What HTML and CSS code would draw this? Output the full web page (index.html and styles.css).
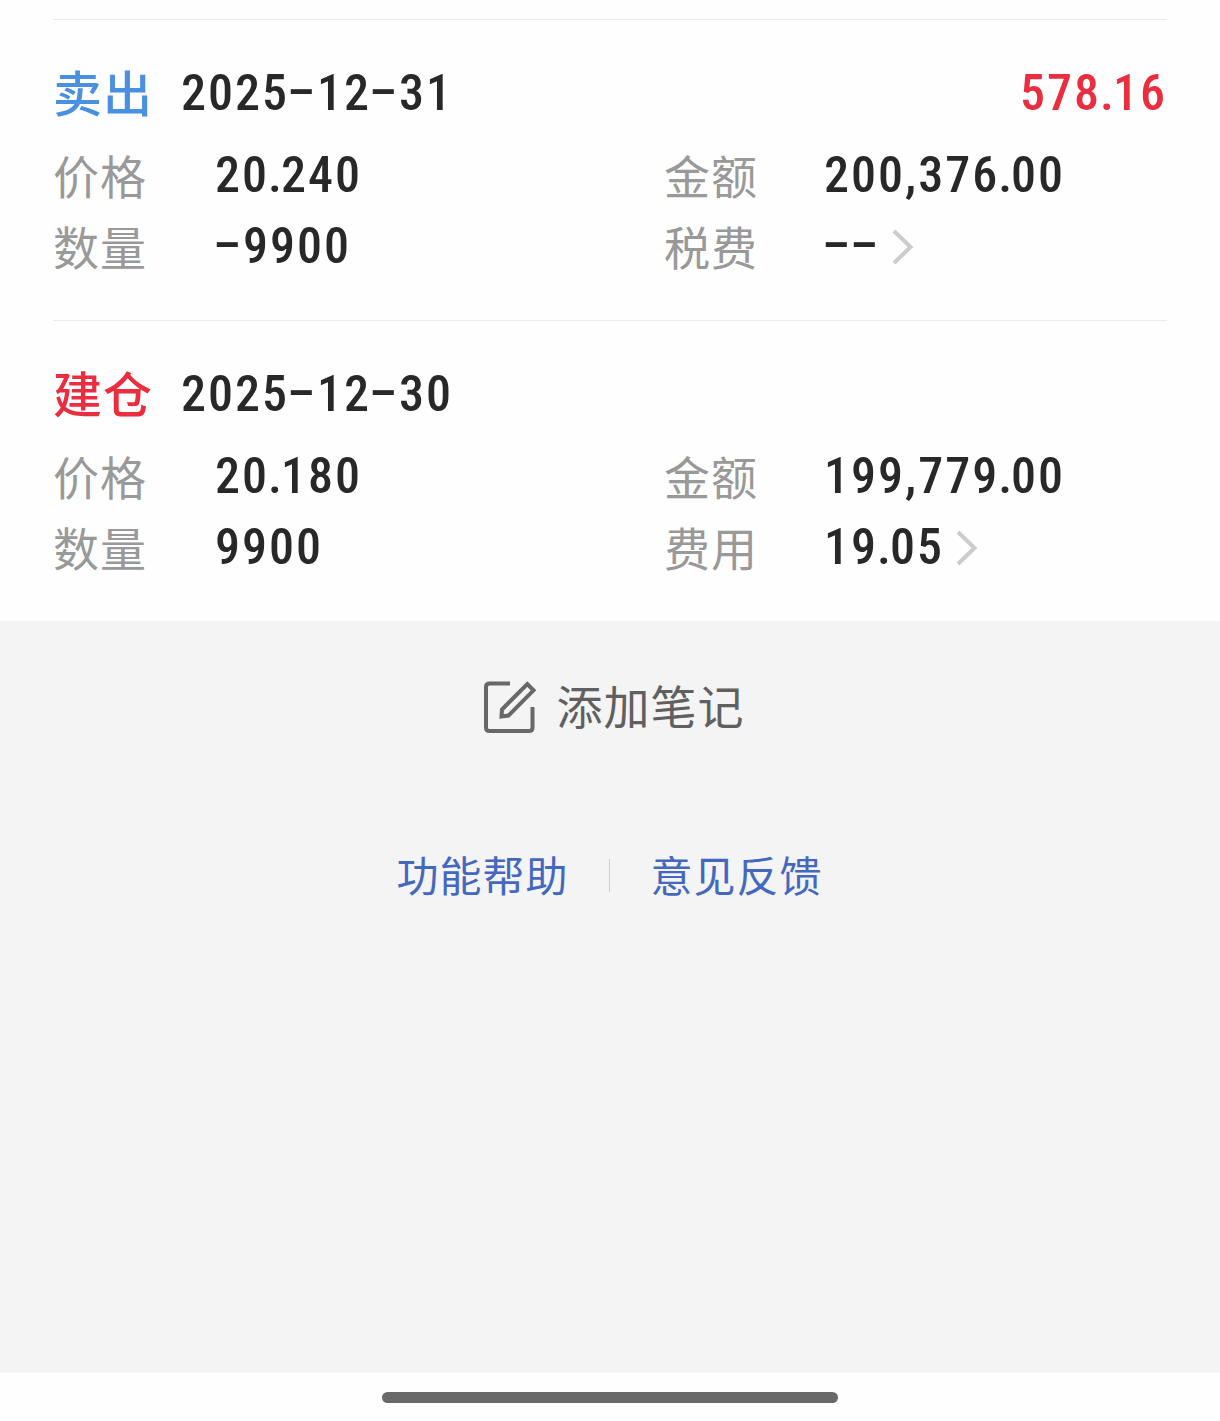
FILE: index.html
```html
<!DOCTYPE html>
<html lang="zh-CN">
<head>
    <meta charset="UTF-8">
    <meta name="viewport" content="width=device-width, initial-scale=1.0">
    <title>交易记录</title>
    <link rel="stylesheet" href="styles.css">
</head>
<body>
    <main class="record-list">
        <section class="record">
            <div class="record-header">
                <span class="record-type sell">卖出</span>
                <span class="number">2025<span class="dash">–</span>12<span class="dash">–</span>31</span>
                <span class="number profit">578<span class="dot">.</span>16</span>
            </div>
            <div class="record-grid">
                <span class="label">价格</span>
                <span class="number">20<span class="dot">.</span>240</span>
                <span class="label">金额</span>
                <span class="number">200,376<span class="dot">.</span>00</span>
                <span class="label">数量</span>
                <span class="number"><span class="dash">–</span>9900</span>
                <span class="label">税费</span>
                <span class="number link-value"><span class="dash">–</span><span class="dash">–</span><svg class="arrow" viewBox="0 0 22 36"><path d="M2 2L18.500 18L2 34"/></svg></span>
            </div>
        </section>

        <section class="record">
            <div class="record-header">
                <span class="record-type open">建仓</span>
                <span class="number">2025<span class="dash">–</span>12<span class="dash">–</span>30</span>
            </div>
            <div class="record-grid">
                <span class="label">价格</span>
                <span class="number">20<span class="dot">.</span>180</span>
                <span class="label">金额</span>
                <span class="number">199,779<span class="dot">.</span>00</span>
                <span class="label">数量</span>
                <span class="number">9900</span>
                <span class="label">费用</span>
                <span class="number link-value">19<span class="dot">.</span>05<svg class="arrow" viewBox="0 0 22 36"><path d="M2 2L18.500 18L2 34"/></svg></span>
            </div>
        </section>
    </main>

    <div class="page-bottom">
        <div class="add-note">
            <svg class="note-icon" viewBox="0 0 54 54">
                <path d="M27 3.500H6.500Q3 3.500 3 7V47.500Q3 51 6.500 51H46Q49.500 51 49.500 47.500V27"/>
                <path d="M18.500 36.500L19 29.500L44.300 4L50.500 10.300L25.500 35.500Z"/>
            </svg>
            <span>添加笔记</span>
        </div>
        <div class="footer-links">
            <a class="footer-link">功能帮助</a>
            <span class="divider"></span>
            <a class="footer-link">意见反馈</a>
        </div>
    </div>

    <div class="home-bar">
        <div class="home-indicator"></div>
    </div>
</body>
</html>
```
FILE: styles.css
```css
* {
    box-sizing: border-box;
}
body {
    margin: 0;
    height: 1421px;
    display: flex;
    flex-direction: column;
    background: #fefefe;
    font-family: "Noto Sans CJK SC", sans-serif;
}
.record-list {
    height: 621px;
    padding: 19px 53px 0;
}
.record {
    height: 301px;
    border-top: 1px solid #ebebeb;
    padding-top: 38px;
}
.record-header {
    display: flex;
    align-items: center;
    height: 70px;
}
.record-type {
    width: 128px;
    margin-top: -4px;
    font-size: 49px;
    line-height: 66px;
    letter-spacing: 1px;
    font-weight: 500;
}
.sell {
    color: #4a90e2;
}
.open {
    color: #ea2d3f;
}
.number {
    font-family: "Roboto Condensed", Roboto, "Noto Sans CJK SC", sans-serif;
    font-size: 50px;
    font-weight: 500;
    font-stretch: 75%;
    letter-spacing: 2px;
    color: #282828;
    white-space: nowrap;
}
.dash {
    position: relative;
    top: -1px;
    margin-left: -2px;
}
.dot {
    margin-left: -1px;
    letter-spacing: -1px;
}
.profit {
    margin-left: auto;
    color: #ea2d3f;
}
.record-grid {
    display: grid;
    grid-template-columns: 162px 449px 160px 1fr;
    grid-auto-rows: 71px;
    align-items: center;
    padding: 11px 0 0;
}
.label {
    font-size: 46px;
    line-height: 71px;
    letter-spacing: 1px;
    color: #999;
}
.link-value {
    display: flex;
    align-items: center;
}
.arrow {
    width: 22px;
    height: 36px;
    margin: 2px 0 0 12px;
    fill: none;
    stroke: #ccc;
    stroke-width: 4;
}
.page-bottom {
    height: 752px;
    padding-top: 50px;
    background: #f4f4f4;
}
.add-note {
    display: flex;
    justify-content: center;
    align-items: center;
    gap: 20px;
    height: 72px;
    padding-left: 7px;
    font-size: 46px;
    letter-spacing: 1px;
    color: #606060;
}
.add-note span {
    margin-top: -6px;
}
.note-icon {
    width: 54px;
    height: 54px;
    fill: none;
    stroke: #686868;
    stroke-width: 4;
}
.footer-links {
    display: flex;
    justify-content: center;
    align-items: center;
    height: 64px;
    margin-top: 100px;
    padding-right: 1px;
}
.footer-link {
    margin-top: -3px;
    font-size: 42px;
    letter-spacing: 1px;
    color: #4568bf;
}
.divider {
    width: 1px;
    height: 33px;
    margin: 0 41px 0 40px;
    background: #ccc;
}
.home-bar {
    flex: 1;
    padding-top: 19px;
}
.home-indicator {
    width: 456px;
    height: 11px;
    margin: 0 auto;
    border-radius: 6px;
    background: #696969;
}
```
